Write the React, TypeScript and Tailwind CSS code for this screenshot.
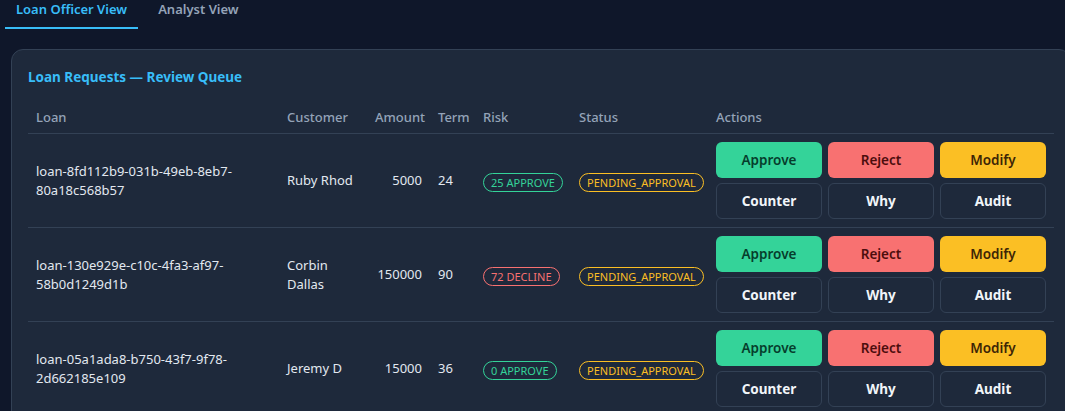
import React from 'react';

type Loan = {
  id: string;
  customer: string;
  amount: number;
  term: number;
  score: number;
  decision: 'APPROVE' | 'DECLINE';
  status: string;
};

const loans: Loan[] = [
  { id: 'loan-8fd112b9-031b-49eb-8eb7-80a18c568b57', customer: 'Ruby Rhod', amount: 5000, term: 24, score: 25, decision: 'APPROVE', status: 'PENDING_APPROVAL' },
  { id: 'loan-130e929e-c10c-4fa3-af97-58b0d1249d1b', customer: 'Corbin Dallas', amount: 150000, term: 90, score: 72, decision: 'DECLINE', status: 'PENDING_APPROVAL' },
  { id: 'loan-05a1ada8-b750-43f7-9f78-2d662185e109', customer: 'Jeremy D', amount: 15000, term: 36, score: 0, decision: 'APPROVE', status: 'PENDING_APPROVAL' },
];

function RiskBadge({ score, decision }: { score: number; decision: Loan['decision'] }) {
  const tone = decision === 'APPROVE' ? 'border-[#34d399] text-[#34d399]' : 'border-[#f87171] text-[#f87171]';
  return (
    <span className={`inline-block rounded-full border px-[7px] text-[11px] leading-[17px] whitespace-nowrap ${tone}`}>
      {score} {decision}
    </span>
  );
}

function LoanRow({ loan }: { loan: Loan }) {
  return (
    <tr className="border-t border-[#334155]">
      <td className="px-2 py-2 align-middle text-[13px] leading-[19px] text-[#e2e8f0] break-words">{loan.id}</td>
      <td className="px-2 py-2 align-middle text-[13px] leading-[19px] text-[#e2e8f0]">{loan.customer}</td>
      <td className="px-2 py-2 align-middle text-[13px] leading-[19px] text-[#e2e8f0] text-right">{loan.amount}</td>
      <td className="px-2 py-2 align-middle text-[13px] leading-[19px] text-[#e2e8f0]">{loan.term}</td>
      <td className="px-2 py-2 align-middle">
        <RiskBadge score={loan.score} decision={loan.decision} />
      </td>
      <td className="px-2 py-2 align-middle">
        <span className="inline-block rounded-full border border-[#fbbf24] px-[7px] text-[11px] leading-[17px] text-[#fbbf24] whitespace-nowrap">
          {loan.status}
        </span>
      </td>
      <td className="px-2 py-2 align-middle">
        <div className="grid grid-cols-3 gap-x-[6px] gap-y-[5px]">
          <button className="h-9 rounded-md bg-[#34d399] text-[13.5px] font-semibold text-[#063d2c]">Approve</button>
          <button className="h-9 rounded-md bg-[#f87171] text-[13.5px] font-semibold text-[#4c0d0d]">Reject</button>
          <button className="h-9 rounded-md bg-[#fbbf24] text-[13.5px] font-semibold text-[#3d2506]">Modify</button>
          <button className="h-9 rounded-md border border-[#334155] text-[13.5px] font-bold text-[#f1f5f9]">Counter</button>
          <button className="h-9 rounded-md border border-[#334155] text-[13.5px] font-bold text-[#f1f5f9]">Why</button>
          <button className="h-9 rounded-md border border-[#334155] text-[13.5px] font-bold text-[#f1f5f9]">Audit</button>
        </div>
      </td>
    </tr>
  );
}

export default function App() {
  return (
    <div
      className="h-screen w-screen overflow-hidden bg-[#0f172a]"
      style={{ fontFamily: '"Noto Sans", "Open Sans", sans-serif' }}
    >
      {/* Tabs */}
      <div className="flex gap-[9px] pl-[5px]">
        <button className="border-b-2 border-[#38bdf8] px-[11px] pb-2 text-[13px] font-semibold leading-[19px] text-[#38bdf8]">
          Loan Officer View
        </button>
        <button className="border-b-2 border-transparent px-[11px] pb-2 text-[13px] font-semibold leading-[19px] text-[#94a3b8]">
          Analyst View
        </button>
      </div>

      {/* Review queue card */}
      <div className="ml-[11px] mt-5 w-[1060px] rounded-xl border border-[#334155] bg-[#1e293b] px-4 pt-[17px] pb-4">
        <h2 className="mb-2.5 text-[13.5px] font-bold leading-5 text-[#38bdf8]">Loan Requests — Review Queue</h2>
        <table className="w-full table-fixed border-collapse">
          <colgroup>
            <col className="w-[251px]" />
            <col className="w-[88px]" />
            <col className="w-[63px]" />
            <col className="w-[45px]" />
            <col className="w-[96px]" />
            <col className="w-[137px]" />
            <col className="w-[346px]" />
          </colgroup>
          <thead>
            <tr className="text-left text-[13px] text-[#94a3b8]">
              <th className="px-2 pt-2.5 pb-1.5 font-medium leading-5">Loan</th>
              <th className="px-2 pt-2.5 pb-1.5 font-medium leading-5">Customer</th>
              <th className="px-2 pt-2.5 pb-1.5 font-medium leading-5 text-right">Amount</th>
              <th className="px-2 pt-2.5 pb-1.5 font-medium leading-5">Term</th>
              <th className="px-2 pt-2.5 pb-1.5 font-medium leading-5">Risk</th>
              <th className="px-2 pt-2.5 pb-1.5 font-medium leading-5">Status</th>
              <th className="px-2 pt-2.5 pb-1.5 font-medium leading-5">Actions</th>
            </tr>
          </thead>
          <tbody>
            {loans.map((loan) => (
              <LoanRow key={loan.id} loan={loan} />
            ))}
          </tbody>
        </table>
      </div>
    </div>
  );
}
